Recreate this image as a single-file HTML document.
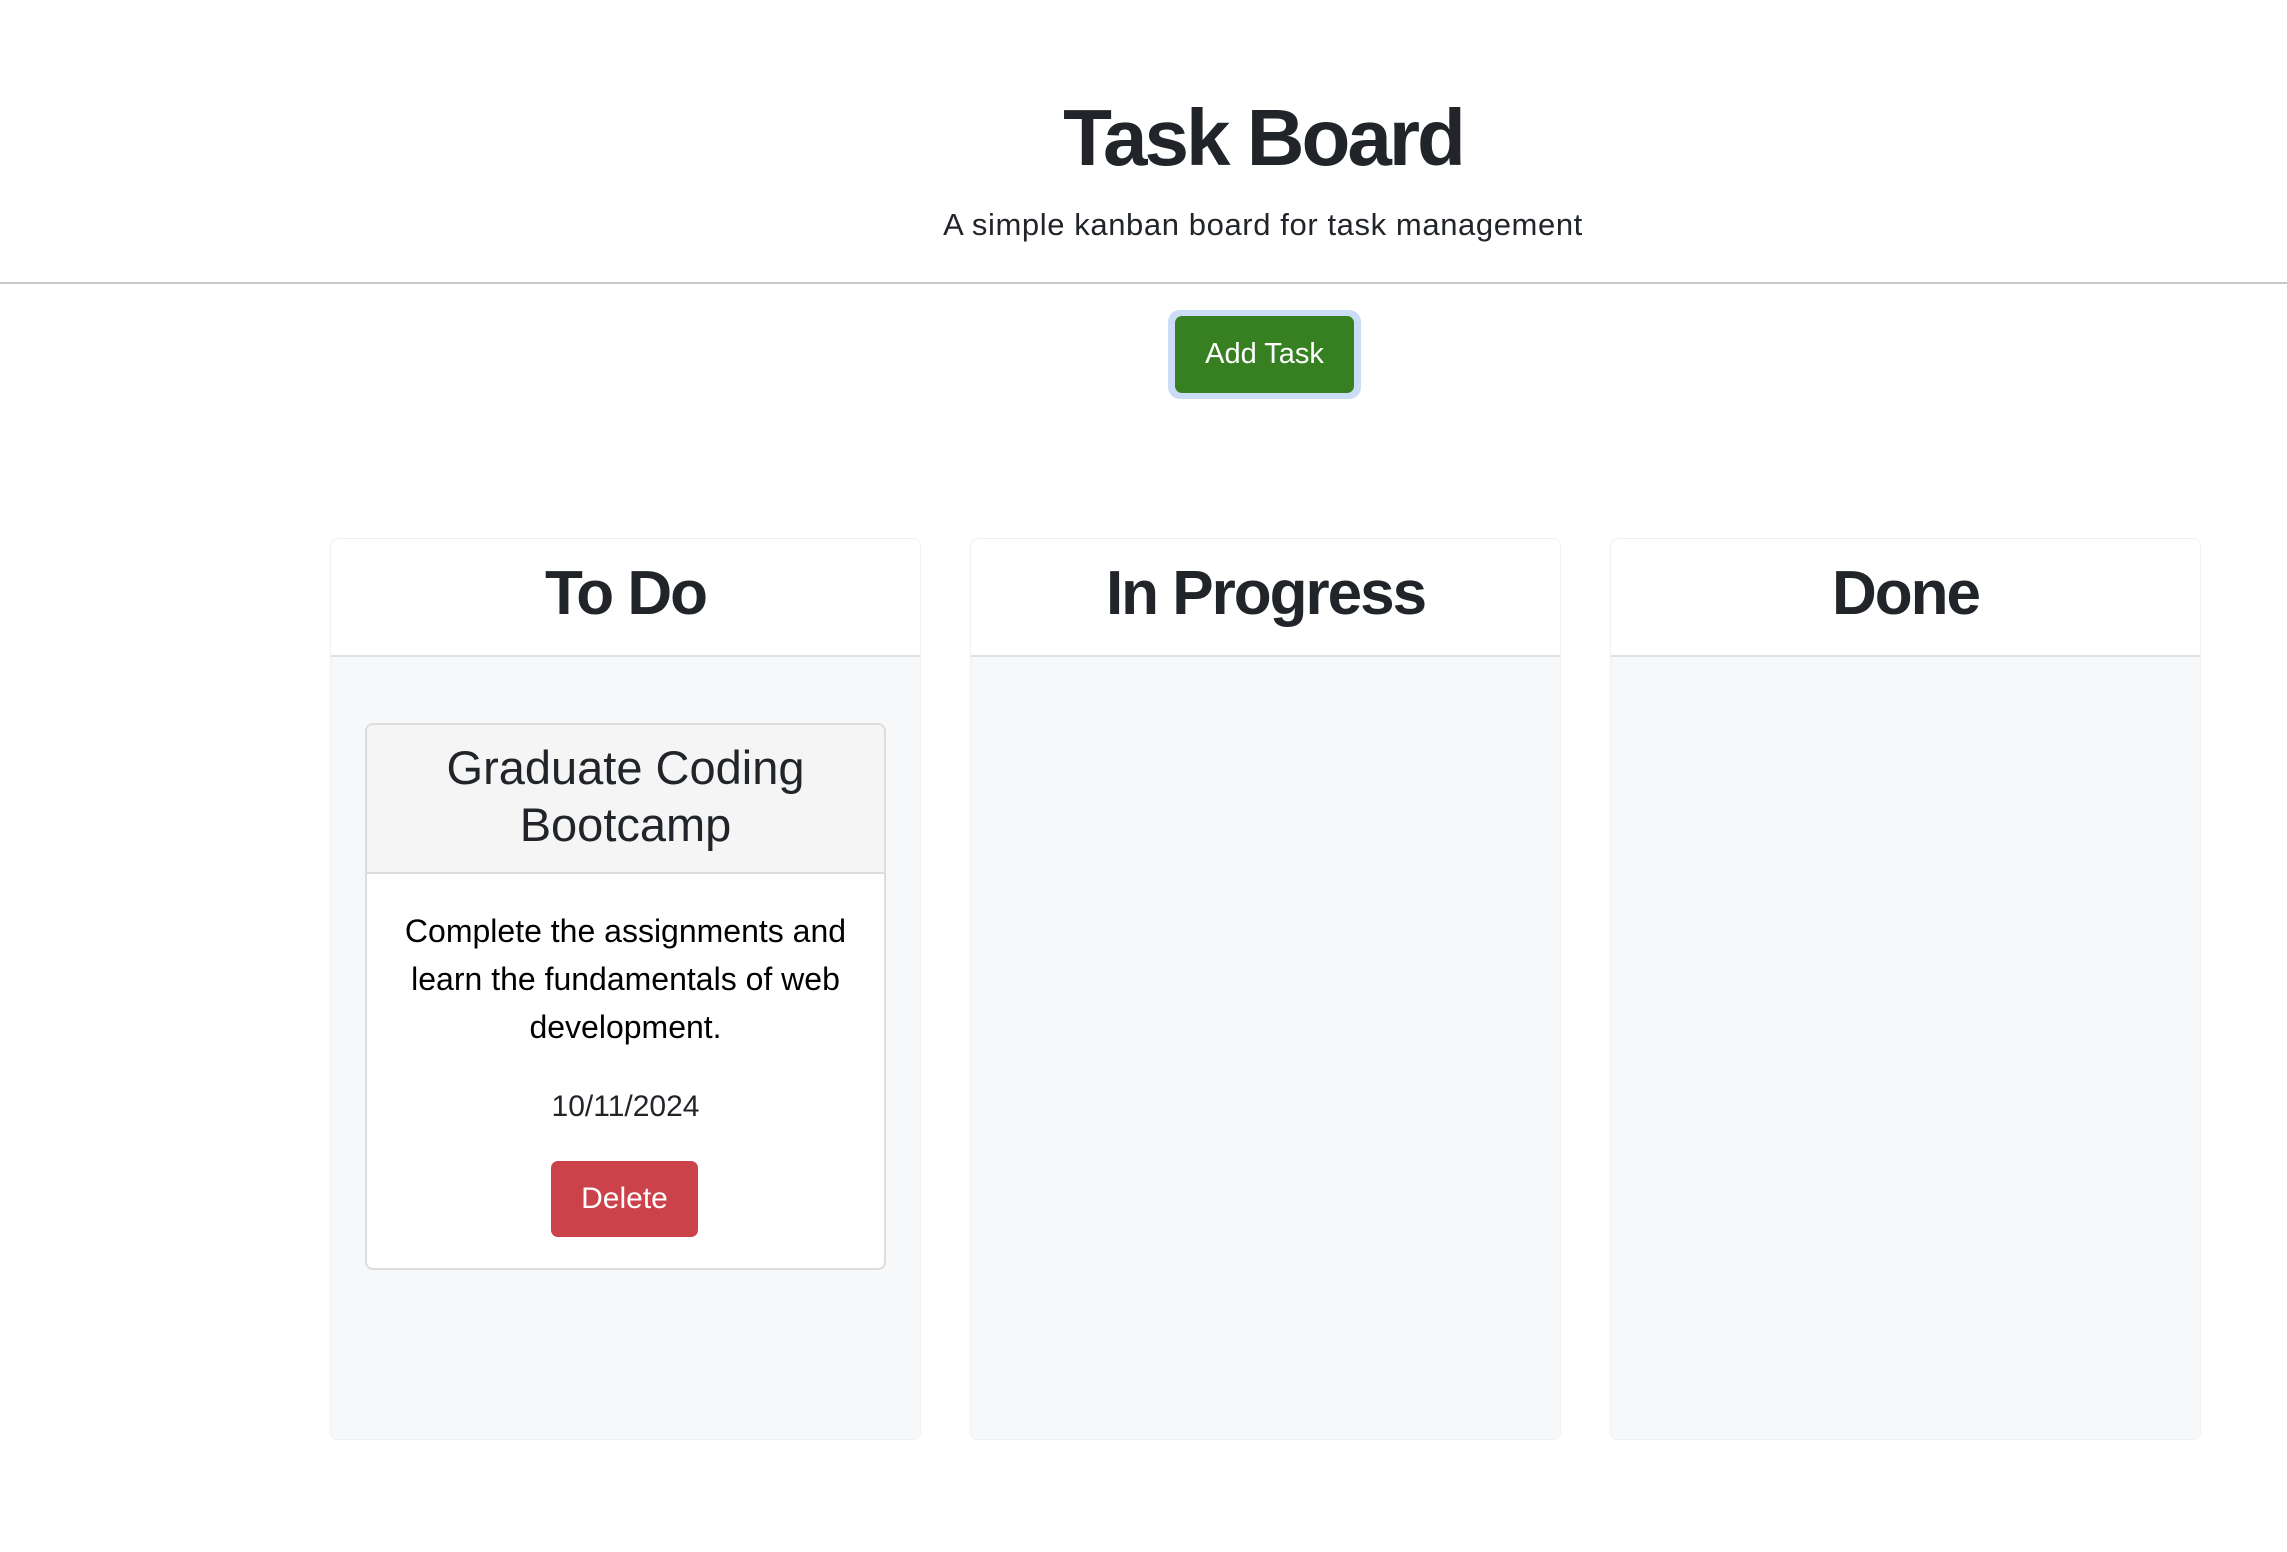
<!DOCTYPE html>
<html><head><meta charset="utf-8"><style>
*{box-sizing:border-box;margin:0;padding:0}
body{width:2287px;height:1552px;background:#fff;font-family:"Liberation Sans",sans-serif;color:#212529;position:relative;overflow:hidden}
.abs{position:absolute}
h1{position:absolute;left:239px;width:2048px;top:88px;text-align:center;font-size:80px;font-weight:bold;letter-spacing:-3px;line-height:100px}
.sub{left:239px;width:2048px;top:207px;text-align:center;font-size:31px;letter-spacing:0.6px;line-height:36px}
.hr{left:0;top:282px;width:2287px;height:2px;background:#c8c8c8}
.btnring{left:1168px;top:310px;width:193px;height:89px;border-radius:12px;background:#cbdcf7}
.btn{left:1175px;top:316px;width:179px;height:77px;border-radius:7px;background:#378022;color:#fff;font-size:29px;text-align:center;line-height:77px}
.col{top:538px;width:591px;height:902px;background:#f7f8f9;border:1px solid #eef0f2;border-radius:8px;overflow:hidden}
.colh{height:118px;background:#fff;border-bottom:2px solid #dee2e6;text-align:center;font-size:62px;font-weight:bold;line-height:110px;letter-spacing:-2px}
.card{left:365px;top:723px;width:521px;height:547px;background:#fff;border:2px solid #dcdcdc;border-radius:8px;overflow:hidden}
.ch{height:149px;background:#f5f5f5;border-bottom:2px solid #dcdcdc;text-align:center;font-size:47px;line-height:57px;padding-top:14px}
.desc{position:absolute;left:10px;right:10px;top:182px;text-align:center;font-size:32px;line-height:48px;color:#000}
.date{position:absolute;left:0;right:0;top:362px;text-align:center;font-size:30px;line-height:40px}
.del{position:absolute;left:184px;top:436px;width:147px;height:76px;background:#cb424a;color:#fff;border-radius:7px;text-align:center;line-height:76px;font-size:30px}
</style></head><body>
<h1>Task Board</h1>
<div class="abs sub">A simple kanban board for task management</div>
<div class="abs hr"></div>
<div class="abs btnring"></div>
<div class="abs btn">Add Task</div>
<div class="abs col" style="left:330px"><div class="colh">To Do</div></div>
<div class="abs col" style="left:970px"><div class="colh">In Progress</div></div>
<div class="abs col" style="left:1610px"><div class="colh">Done</div></div>
<div class="abs card">
<div class="ch">Graduate Coding<br>Bootcamp</div>
<div class="desc">Complete the assignments and learn the fundamentals of web development.</div>
<div class="date">10/11/2024</div>
<div class="del">Delete</div>
</div>
</body></html>
